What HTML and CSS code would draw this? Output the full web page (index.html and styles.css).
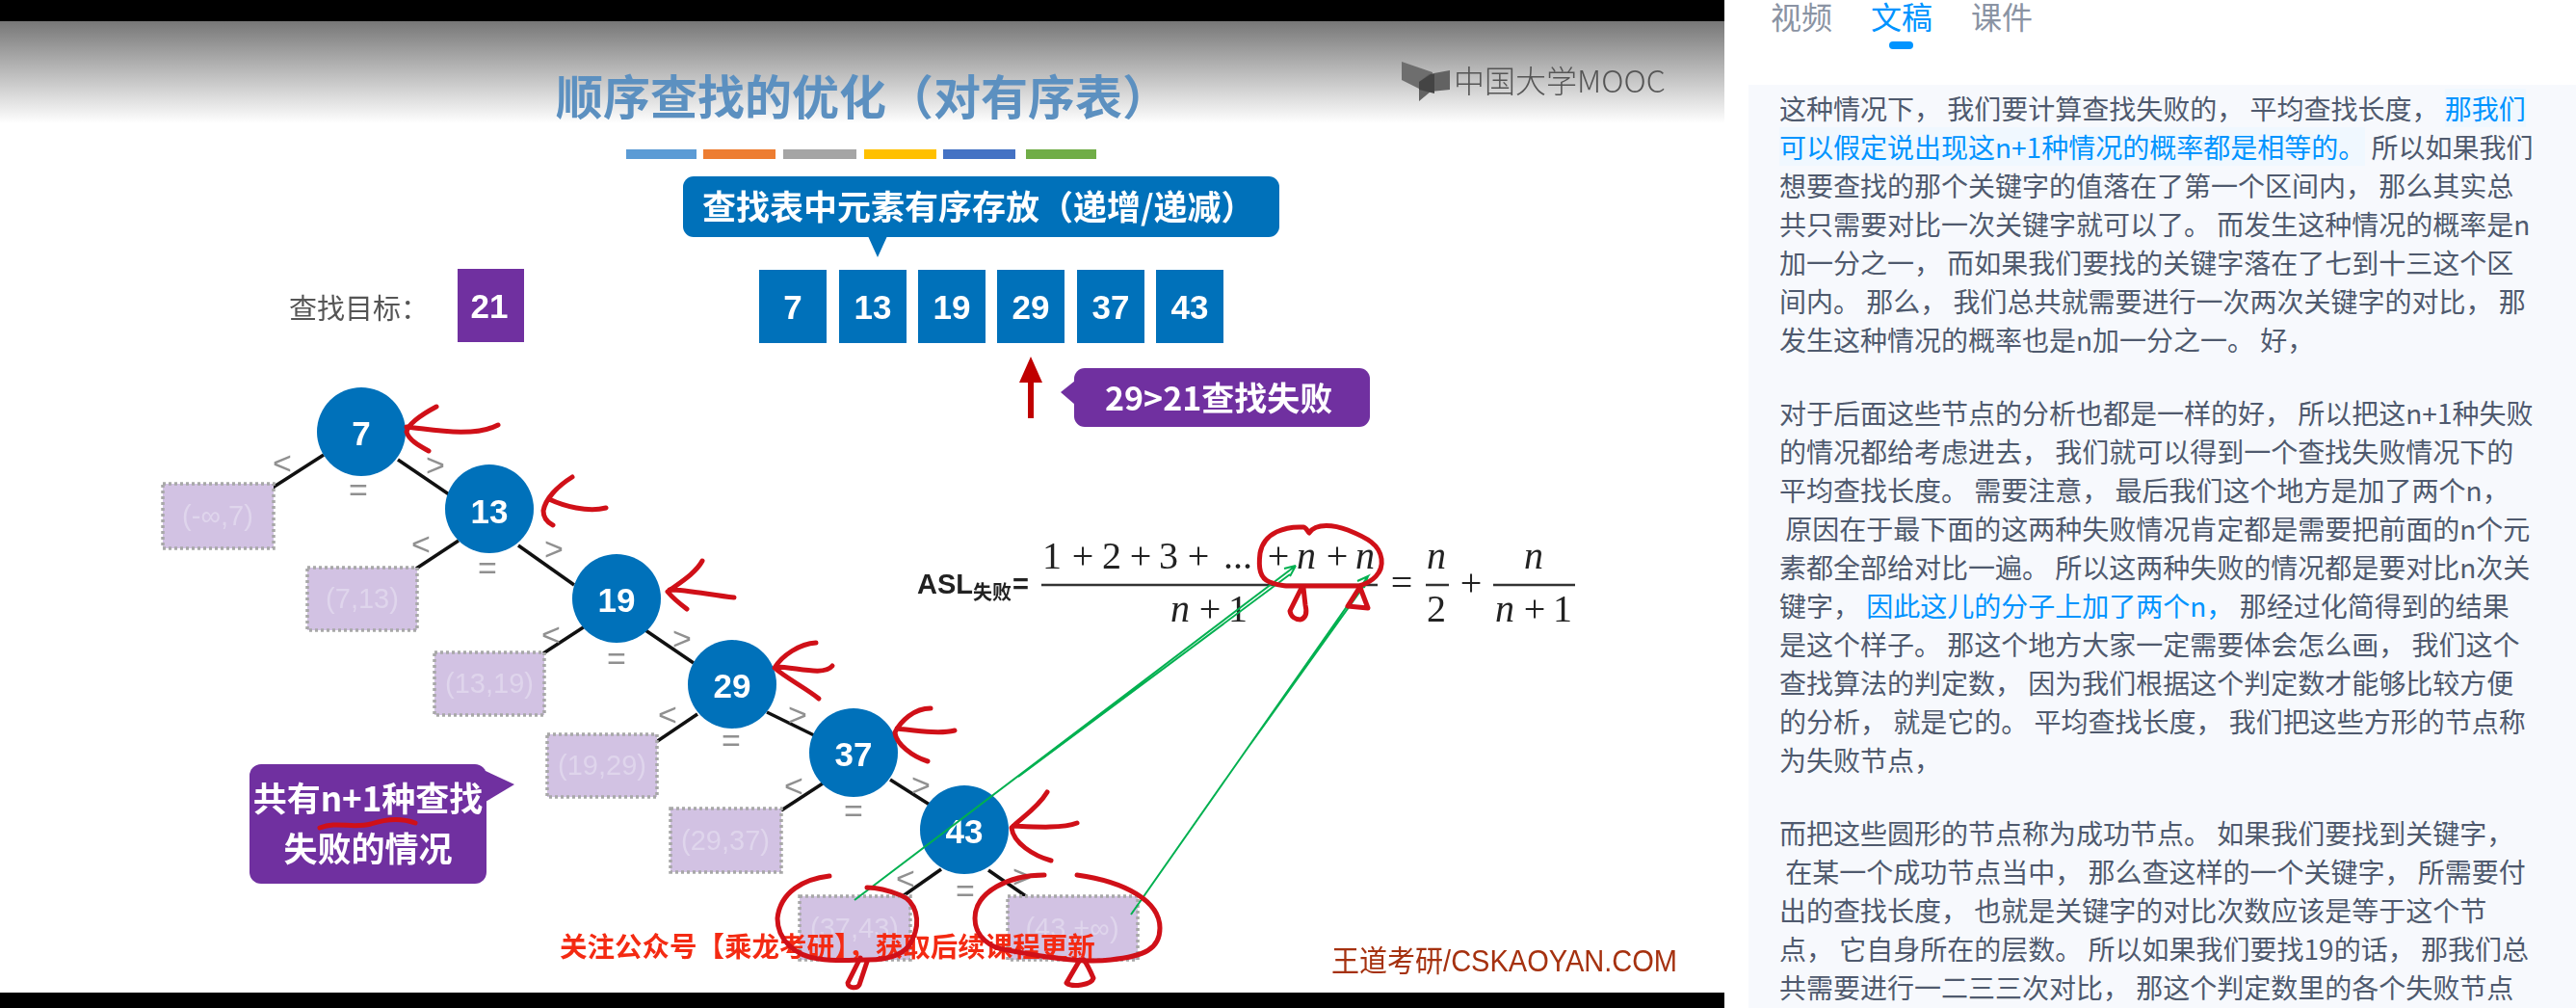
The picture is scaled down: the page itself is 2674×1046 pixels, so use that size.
FILE: index.html
```html
<!DOCTYPE html>
<html lang="zh-CN">
<head>
  <meta charset="UTF-8">
  <meta name="viewport" content="width=device-width, initial-scale=1.0">
  <title>顺序查找的优化</title>
  <link rel="stylesheet" href="styles.css">
</head>
<body>
  <div class="page">
    <div class="video">
      <!-- the video frame: coordinates are the frame's own -->
      <svg class="slide" viewBox="0 22 1790 1008" width="1790" height="1008">
        <defs>
          <linearGradient id="fade" x1="0" y1="0" x2="0" y2="1">
            <stop offset="0" stop-color="#777"/>
            <stop offset="1" stop-color="#fff"/>
          </linearGradient>
        </defs>
        <rect x="0" y="22" width="1790" height="1008" fill="#fff"/>
        <rect x="0" y="22" width="1790" height="106" fill="url(#fade)"/>

        <!-- logo -->
        <polygon class="logo-left" points="1455,64 1487,75 1487,90 1473,92 1455,83"/>
        <polygon class="logo-right" points="1473,85 1483,77 1505,73 1505,93 1485,95 1473,105"/>
        <polygon class="logo-mid" points="1473,85 1485,77 1489,77 1489,97 1473,93"/>
        <text class="logo-text" x="1509" y="96">中国大学MOOC</text>

        <text class="title" x="577" y="119">顺序查找的优化（对有序表）</text>
        <rect x="650" y="155" width="73" height="10" fill="#5b9bd5"/>
        <rect x="730" y="155" width="75" height="10" fill="#ed7d31"/>
        <rect x="813" y="155" width="76" height="10" fill="#a5a5a5"/>
        <rect x="897" y="155" width="75" height="10" fill="#ffc000"/>
        <rect x="979" y="155" width="75" height="10" fill="#4472c4"/>
        <rect x="1065" y="155" width="73" height="10" fill="#70ad47"/>

        <!-- sorted table -->
        <rect class="blue" x="709" y="183" width="619" height="63" rx="11"/>
        <polygon class="blue" points="901,245 921,245 911,267"/>
        <text class="callout" x="729" y="228">查找表中元素有序存放（递增/递减）</text>

        <text class="target-label" x="300" y="331">查找目标：</text>
        <rect class="purple" x="475" y="279" width="69" height="76"/>
        <text class="num" x="508" y="317">21</text>

        <g>
          <rect class="blue" x="788" y="280" width="70" height="76"/>
          <rect class="blue" x="871" y="280" width="70" height="76"/>
          <rect class="blue" x="953" y="280" width="70" height="76"/>
          <rect class="blue" x="1035" y="280" width="70" height="76"/>
          <rect class="blue" x="1118" y="280" width="70" height="76"/>
          <rect class="blue" x="1200" y="280" width="70" height="76"/>
          <text class="num" x="823" y="318">7</text>
          <text class="num" x="906" y="318">13</text>
          <text class="num" x="988" y="318">19</text>
          <text class="num" x="1070" y="318">29</text>
          <text class="num" x="1153" y="318">37</text>
          <text class="num" x="1235" y="318">43</text>
        </g>

        <polygon class="up-arrow" points="1070,370 1082,397 1073,397 1073,434 1067,434 1067,397 1058,397"/>
        <rect class="purple" x="1115" y="382" width="307" height="61" rx="11"/>
        <polygon class="purple" points="1116,395 1101,407 1116,420"/>
        <text class="callout small" x="1147" y="426">29&gt;21查找失败</text>

        <!-- decision tree -->
        <g class="edges">
          <line x1="336" y1="472" x2="283" y2="506"/>
          <line x1="413" y1="477" x2="466" y2="513"/>
          <line x1="476" y1="561" x2="432" y2="590"/>
          <line x1="538" y1="566" x2="596" y2="607"/>
          <line x1="607" y1="650" x2="564" y2="678"/>
          <line x1="670" y1="654" x2="720" y2="688"/>
          <line x1="724" y1="741" x2="681" y2="770"/>
          <line x1="796" y1="739" x2="845" y2="763"/>
          <line x1="854" y1="813" x2="811" y2="841"/>
          <line x1="924" y1="809" x2="965" y2="835"/>
          <line x1="977" y1="902" x2="937" y2="930"/>
          <line x1="1026" y1="903" x2="1065" y2="930"/>
        </g>

        <g class="cmp">
          <text x="293" y="480">&lt;</text><text x="452" y="482">&gt;</text><text x="372" y="508">=</text>
          <text x="437" y="564">&lt;</text><text x="575" y="569">&gt;</text><text x="506" y="589">=</text>
          <text x="572" y="658">&lt;</text><text x="708" y="662">&gt;</text><text x="640" y="683">=</text>
          <text x="693" y="741">&lt;</text><text x="828" y="741">&gt;</text><text x="759" y="768">=</text>
          <text x="824" y="815">&lt;</text><text x="956" y="814">&gt;</text><text x="886" y="841">=</text>
          <text x="940" y="911">&lt;</text><text x="1061" y="909">&gt;</text><text x="1002" y="924">=</text>
        </g>

        <g class="fail">
          <rect x="169" y="502" width="115" height="67"/>
          <rect x="319" y="589" width="114" height="65"/>
          <rect x="451" y="677" width="114" height="65"/>
          <rect x="568" y="762" width="114" height="65"/>
          <rect x="696" y="839" width="115" height="66"/>
          <rect x="830" y="930" width="115" height="66"/>
          <rect x="1046" y="930" width="135" height="66"/>
        </g>
        <g class="fail-text">
          <text x="226" y="535">(-∞,7)</text>
          <text x="376" y="621">(7,13)</text>
          <text x="508" y="709">(13,19)</text>
          <text x="625" y="794">(19,29)</text>
          <text x="753" y="872">(29,37)</text>
          <text x="887" y="963">(37,43)</text>
          <text x="1113" y="963">(43,+∞)</text>
        </g>

        <g>
          <circle class="blue" cx="375" cy="448" r="46"/>
          <circle class="blue" cx="508" cy="528" r="46"/>
          <circle class="blue" cx="640" cy="621" r="46"/>
          <circle class="blue" cx="760" cy="710" r="46"/>
          <circle class="blue" cx="886" cy="781" r="46"/>
          <circle class="blue" cx="1001" cy="861" r="46"/>
          <text class="num" x="375" y="449">7</text>
          <text class="num" x="508" y="530">13</text>
          <text class="num" x="640" y="622">19</text>
          <text class="num" x="760" y="711">29</text>
          <text class="num" x="886" y="782">37</text>
          <text class="num" x="1001" y="862">43</text>
        </g>

        <rect class="purple" x="259" y="793" width="246" height="124" rx="12"/>
        <polygon class="purple" points="504,800 534,814 504,832"/>
        <text class="callout center" x="382" y="842">共有n+1种查找</text>
        <text class="callout center" x="382" y="894">失败的情况</text>

        <!-- formula -->
        <text class="asl" x="952" y="616">ASL</text>
        <text class="asl-sub" x="1010" y="622">失败</text>
        <text class="asl" x="1051" y="616">=</text>
        <text class="math" x="1092" y="590">1</text>
        <text class="math" x="1124" y="590">+</text>
        <text class="math" x="1154" y="590">2</text>
        <text class="math" x="1184" y="590">+</text>
        <text class="math" x="1213" y="590">3</text>
        <text class="math" x="1244" y="590">+</text>
        <text class="math" x="1285" y="590">...</text>
        <text class="math" x="1327" y="590">+</text>
        <text class="math var" x="1356" y="590">n</text>
        <text class="math" x="1388" y="590">+</text>
        <text class="math var" x="1417" y="590">n</text>
        <line class="bar" x1="1081" y1="607" x2="1430" y2="607"/>
        <text class="math var" x="1225" y="645">n</text>
        <text class="math" x="1256" y="645">+</text>
        <text class="math" x="1285" y="645">1</text>
        <text class="math" x="1455" y="618">=</text>
        <text class="math var" x="1491" y="590">n</text>
        <line class="bar" x1="1480" y1="607" x2="1504" y2="607"/>
        <text class="math" x="1491" y="645">2</text>
        <text class="math" x="1527" y="618">+</text>
        <text class="math var" x="1592" y="590">n</text>
        <line class="bar" x1="1550" y1="607" x2="1635" y2="607"/>
        <text class="math var" x="1562" y="645">n</text>
        <text class="math" x="1593" y="645">+</text>
        <text class="math" x="1622" y="645">1</text>

        <text class="promo" x="581" y="993">关注公众号【乘龙考研】，获取后续课程更新</text>
        <text class="brand" x="1382" y="1008" textLength="359" lengthAdjust="spacingAndGlyphs">王道考研/CSKAOYAN.COM</text>

        <!-- pen strokes over the slide -->
        <g class="green">
          <path d="M887 934 L1345 587 L1333 590 M1345 587 L1339 598 M1057 806 L1339 596"/>
          <path d="M1174 949 L1420 598 L1409 603 M1420 598 L1416 610 M1296 775 L1416 608"/>
        </g>
        <g class="ink">
          <path d="M453 422 C438 430 424 440 422 448 C424 456 434 462 445 468 M422 443 C445 445 490 455 517 441"/>
          <path d="M594 495 C578 505 566 518 564 530 C564 538 568 542 574 545 M570 518 C585 525 610 532 629 527"/>
          <path d="M729 582 C722 595 705 605 693 614 C698 620 705 626 713 632 M695 612 C715 612 740 618 762 620"/>
          <path d="M847 667 C830 668 812 680 804 693 C815 703 838 715 850 725 M806 692 C825 692 855 702 864 691"/>
          <path d="M966 735 C949 735 935 748 929 760 C930 772 947 785 963 790 M931 756 C950 758 975 762 991 758"/>
          <path d="M1087 822 C1076 840 1058 850 1050 859 C1052 875 1073 888 1091 893 M1052 857 C1073 858 1103 860 1118 854"/>
          <path d="M332 859 C350 852 365 860 385 855 C400 850 415 848 431 854"/>
          <path d="M861 909 C835 912 810 925 807 953 C807 975 825 992 850 995 C870 998 885 996 900 996 C925 996 941 990 947 975 C957 955 950 935 935 929 C925 925 912 921 900 921"/>
          <path d="M893 994 L880 1020 C880 1026 890 1026 892 1022 L900 998"/>
          <path d="M1084 908 C1048 908 1012 925 1012 953 C1012 972 1028 984 1046 986 C1078 992 1123 1000 1153 996 C1188 992 1204 985 1204 963 C1204 935 1168 915 1118 908"/>
          <path d="M1121 996 L1107 1020 C1113 1025 1133 1022 1135 1015 C1132 1008 1128 1000 1125 996"/>
          <path d="M1353 547 C1335 546 1312 552 1308 574 C1306 590 1308 600 1318 604 C1330 609 1340 608 1355 608 L1411 608 C1424 604 1436 595 1434 580 C1432 565 1419 558 1399 550 C1386 545 1366 542 1359 553 C1356 549 1355 547 1353 547"/>
          <path d="M1351 610 L1339 634 C1340 640 1345 643 1350 643 C1356 641 1357 636 1355 628 L1353 610"/>
          <path d="M1411 610 L1399 629 L1420 631 L1412 610"/>
        </g>
      </svg>
    </div>

    <div class="side">
      <div class="tabs">
        <span class="tab">视频</span>
        <span class="tab active">文稿</span>
        <span class="tab">课件</span>
      </div>
      <div class="transcript">
        <p>这种情况下， 我们要计算查找失败的， 平均查找长度， <span class="mark">那我们<br>可以假定说出现这n+1种情况的概率都是相等的。</span> 所以如果我们<br>想要查找的那个关键字的值落在了第一个区间内， 那么其实总<br>共只需要对比一次关键字就可以了。 而发生这种情况的概率是n<br>加一分之一， 而如果我们要找的关键字落在了七到十三这个区<br>间内。 那么， 我们总共就需要进行一次两次关键字的对比， 那<br>发生这种情况的概率也是n加一分之一。 好，</p>
        <p>对于后面这些节点的分析也都是一样的好， 所以把这n+1种失败<br>的情况都给考虑进去， 我们就可以得到一个查找失败情况下的<br>平均查找长度。 需要注意， 最后我们这个地方是加了两个n，<br> 原因在于最下面的这两种失败情况肯定都是需要把前面的n个元<br>素都全部给对比一遍。 所以这两种失败的情况都是要对比n次关<br>键字， <span class="note">因此这儿的分子上加了两个n，</span> 那经过化简得到的结果<br>是这个样子。 那这个地方大家一定需要体会怎么画， 我们这个<br>查找算法的判定数， 因为我们根据这个判定数才能够比较方便<br>的分析， 就是它的。 平均查找长度， 我们把这些方形的节点称<br>为失败节点，</p>
        <p>而把这些圆形的节点称为成功节点。 如果我们要找到关键字，<br> 在某一个成功节点当中， 那么查这样的一个关键字， 所需要付<br>出的查找长度， 也就是关键字的对比次数应该是等于这个节<br>点， 它自身所在的层数。 所以如果我们要找19的话， 那我们总<br>共需要进行一二三三次对比， 那这个判定数里的各个失败节点</p>
      </div>
    </div>
  </div>
</body>
</html>
```

FILE: styles.css
```css
html, body {
  margin: 0;
  height: 100%;
  overflow: hidden;
  background: #fff;
}
.page {
  display: flex;
  height: 1046px;
  font-family: "Noto Sans CJK SC", "Noto Sans", sans-serif;
}

/* video frame */
.video {
  flex: 0 0 1790px;
  background: #000;
  padding: 22px 0 16px;
  box-sizing: border-box;
}
.slide {
  display: block;
  filter: blur(0.6px);
  font-family: "Liberation Sans", "Noto Sans CJK SC", sans-serif;
}
.blue {
  fill: #0071ba;
}
.purple {
  fill: #7030a0;
}
.title {
  font-family: "Noto Sans CJK SC", sans-serif;
  font-size: 49px;
  font-weight: 700;
  fill: #5c90c0;
}
.logo-left {
  fill: #6e6e6e;
}
.logo-right {
  fill: #626262;
}
.logo-mid {
  fill: #444;
}
.logo-text {
  font-family: "Noto Sans CJK SC", sans-serif;
  font-size: 32px;
  font-weight: 300;
  fill: #555;
}
.callout {
  font-family: "Noto Sans CJK SC", sans-serif;
  font-size: 35px;
  font-weight: 700;
  fill: #fff;
}
.callout.small {
  font-size: 34px;
}
.center {
  text-anchor: middle;
}
.target-label {
  font-family: "Noto Sans CJK SC", sans-serif;
  font-size: 29px;
  fill: #555;
}
.num {
  font-size: 35px;
  font-weight: 700;
  fill: #fff;
  text-anchor: middle;
  dominant-baseline: central;
}
.up-arrow {
  fill: #c00000;
}
.edges line {
  stroke: #111;
  stroke-width: 3.5;
}
.cmp text {
  font-size: 34px;
  fill: #909090;
  text-anchor: middle;
  dominant-baseline: central;
}
.fail rect {
  fill: #d2c2e3;
  stroke: #a8a8a8;
  stroke-width: 3.5;
  stroke-dasharray: 3 3;
}
.fail-text text {
  font-size: 29px;
  fill: #dfd5ec;
  text-anchor: middle;
  dominant-baseline: central;
}
.asl {
  font-size: 29px;
  font-weight: 700;
  fill: #222;
}
.asl-sub {
  font-family: "Noto Sans CJK SC", sans-serif;
  font-size: 20px;
  font-weight: 700;
  fill: #222;
}
.math {
  font-family: "Liberation Serif", serif;
  font-size: 40px;
  fill: #222;
  text-anchor: middle;
}
.var {
  font-style: italic;
}
.bar {
  stroke: #333;
  stroke-width: 2.5;
}
.promo {
  font-family: "Noto Sans CJK SC", sans-serif;
  font-size: 28.5px;
  font-weight: 700;
  fill: #f42a12;
}
.brand {
  font-size: 31px;
  fill: #a5310f;
}
.green path {
  fill: none;
  stroke: #00b050;
  stroke-width: 2;
}
.ink path {
  fill: none;
  stroke: #d01018;
  stroke-width: 5;
  stroke-linecap: round;
  stroke-linejoin: round;
}

/* right column */
.side {
  flex: 1;
  min-width: 0;
  display: flex;
  flex-direction: column;
}
.tabs {
  display: flex;
  gap: 40px;
  padding-left: 48px;
  height: 88px;
  box-sizing: border-box;
}
.tab {
  position: relative;
  font-size: 32px;
  line-height: 33px;
  color: #8a93a3;
}
.tab.active {
  color: #0094ff;
}
.tab.active::after {
  content: "";
  position: absolute;
  left: 19px;
  top: 43px;
  width: 25px;
  height: 8px;
  border-radius: 4px;
  background: #0094ff;
}
.transcript {
  flex: 1;
  margin-left: 25px;
  padding: 4px 0 0 32px;
  background: #f7f9fd;
  font-size: 28px;
  line-height: 40px;
  color: #4f5a6e;
  overflow: hidden;
}
.transcript p {
  margin: 0 0 36px;
  white-space: pre;
}
.mark {
  color: #0094ff;
  background: #f0f8ff;
}
.note {
  color: #0094ff;
}
```
